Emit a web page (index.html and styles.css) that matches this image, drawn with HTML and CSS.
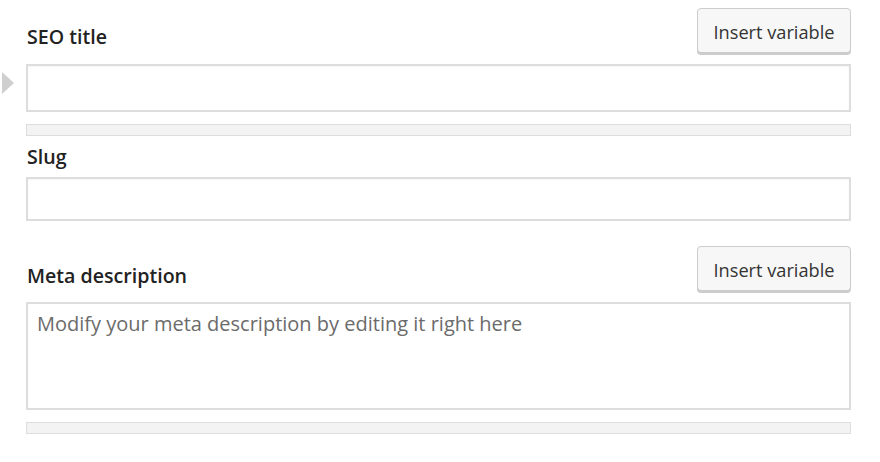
FILE: index.html
```html
<!DOCTYPE html>
<html lang="en">
<head>
<meta charset="utf-8">
<title>Snippet editor</title>
<link rel="stylesheet" href="styles.css">
</head>
<body>
<div class="editor">
  <div class="field field-title">
    <span class="marker"></span>
    <div class="head">
      <label class="label">SEO title</label>
      <button class="insert">Insert variable</button>
    </div>
    <div class="input"></div>
    <div class="progress"></div>
  </div>
  <div class="field field-slug">
    <label class="label">Slug</label>
    <div class="input input-slug"></div>
  </div>
  <div class="field field-desc">
    <div class="head">
      <label class="label">Meta description</label>
      <button class="insert">Insert variable</button>
    </div>
    <div class="textarea"><span class="placeholder">Modify your meta description by editing it right here</span></div>
    <div class="progress"></div>
  </div>
</div>
</body>
</html>
```
FILE: styles.css
```css
html, body {
  margin: 0;
  padding: 0;
  background: #fff;
}
body {
  font-family: "Open Sans", "Noto Sans", sans-serif;
  color: #1e1e1e;
}
.editor {
  width: 825px;
  padding: 8px 0 0 26px;
}
.field {
  position: relative;
  display: flex;
  flex-direction: column;
}
.marker {
  position: absolute;
  left: -24px;
  top: 64px;
  width: 0;
  height: 0;
  border-top: 11px solid transparent;
  border-bottom: 11px solid transparent;
  border-left: 12px solid #cfcfcf;
}
.head {
  display: flex;
  justify-content: space-between;
  align-items: flex-end;
  margin-bottom: 9px;
}
.label {
  font-size: 19.6px;
  font-weight: 600;
  line-height: 24px;
  padding-left: 1px;
  padding-bottom: 6px;
  color: #222;
}
.insert {
  box-sizing: border-box;
  width: 154px;
  height: 45px;
  margin-bottom: 2px;
  padding: 3px 0 0;
  font-family: inherit;
  font-size: 18.2px;
  color: #333;
  background: #f7f7f7;
  border: 1px solid #cccccc;
  border-radius: 4px;
  box-shadow: 0 2px 0 #cccccc;
}
.input {
  box-sizing: border-box;
  height: 48px;
  border: 2px solid #dddddd;
  box-shadow: inset 0 1px 2px rgba(0,0,0,0.04);
}
.progress {
  box-sizing: border-box;
  height: 12px;
  margin-top: 12px;
  border: 1px solid #dddddd;
  background: #f3f3f3;
}
.field-slug {
  margin-top: 9px;
}
.field-slug .label {
  padding-bottom: 8px;
}
.input-slug {
  height: 44px;
}
.field-desc {
  margin-top: 25px;
}
.field-desc .label {
  padding-bottom: 5px;
}
.textarea {
  box-sizing: border-box;
  height: 108px;
  border: 2px solid #dddddd;
  padding: 7px 9px;
}
.placeholder {
  font-size: 20px;
  line-height: 26px;
  color: #6b6b6b;
}
```
